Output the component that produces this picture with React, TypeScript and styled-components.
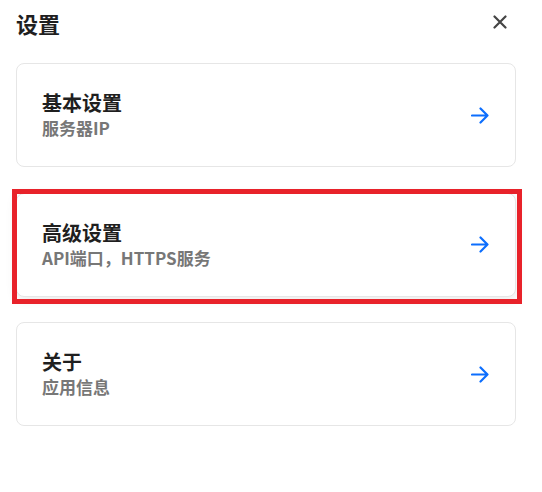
import React from "react";
import styled, { createGlobalStyle } from "styled-components";

const GlobalStyle = createGlobalStyle`
  html, body {
    margin: 0;
    padding: 0;
    background: #ffffff;
  }
  body {
    font-family: "Noto Sans CJK SC", "Noto Sans", sans-serif;
    -webkit-font-smoothing: antialiased;
  }
`;

const Panel = styled.div`
  width: 500px;
  margin-left: 16px;
  display: flex;
  flex-direction: column;
`;

const Header = styled.header`
  box-sizing: border-box;
  height: 63px;
  display: flex;
  justify-content: space-between;
  align-items: flex-start;
`;

const Title = styled.h1`
  margin: 7px 0 0 0;
  font-size: 22px;
  line-height: 32px;
  font-weight: 700;
  color: #1f1f1f;
`;

const CloseButton = styled.button`
  width: 28px;
  height: 28px;
  margin-top: 8px;
  margin-right: 2px;
  padding: 0;
  border: none;
  background: transparent;
  display: flex;
  align-items: center;
  justify-content: center;
  color: #454545;
  cursor: pointer;
`;

const List = styled.div`
  display: flex;
  flex-direction: column;
  gap: 25.5px;
`;

const Card = styled.div<{ $highlighted?: boolean }>`
  position: relative;
  box-sizing: border-box;
  height: 104px;
  padding: 0 26px 0 25px;
  border: 1px solid #e6e6e6;
  border-radius: 8px;
  background: #ffffff;
  display: flex;
  align-items: center;
  justify-content: space-between;
  cursor: pointer;
  box-shadow: ${(p) => (p.$highlighted ? "0 3px 12px rgba(0, 0, 0, 0.09)" : "none")};

  &::after {
    content: "";
    display: ${(p) => (p.$highlighted ? "block" : "none")};
    position: absolute;
    left: -5px;
    top: -5px;
    right: -7px;
    bottom: -8px;
    border: 5px solid #e8222a;
    pointer-events: none;
  }
`;

const TextBlock = styled.div`
  display: flex;
  flex-direction: column;
`;

const CardTitle = styled.div`
  font-size: 20px;
  line-height: 26px;
  font-weight: 700;
  color: #1f1f1f;
`;

const CardSubtitle = styled.div`
  font-size: 17px;
  line-height: 24px;
  font-weight: 600;
  color: #777777;
`;

const ArrowIcon = styled.svg`
  flex: none;
  color: #0d6efd;
`;

const CloseIcon = () => (
  <svg width="14" height="14" viewBox="0 0 14 14" fill="none">
    <path d="M1.5 1.5 L12.5 12.5 M12.5 1.5 L1.5 12.5" stroke="currentColor" strokeWidth="2.2" strokeLinecap="round" />
  </svg>
);

const Arrow = () => (
  <ArrowIcon width="18" height="17" viewBox="0 0 18 17" fill="none">
    <path d="M1 8.5 H16.5 M9.5 1.5 L16.5 8.5 L9.5 15.5" stroke="currentColor" strokeWidth="2.2" strokeLinecap="round" strokeLinejoin="round" />
  </ArrowIcon>
);

const items = [
  { title: "基本设置", subtitle: "服务器IP" },
  { title: "高级设置", subtitle: "API端口，HTTPS服务", highlighted: true },
  { title: "关于", subtitle: "应用信息" },
];

export default function App() {
  return (
    <>
      <GlobalStyle />
      <Panel>
        <Header>
          <Title>设置</Title>
          <CloseButton aria-label="关闭">
            <CloseIcon />
          </CloseButton>
        </Header>
        <List>
          {items.map((it) => (
            <Card key={it.title} $highlighted={it.highlighted}>
              <TextBlock>
                <CardTitle>{it.title}</CardTitle>
                <CardSubtitle>{it.subtitle}</CardSubtitle>
              </TextBlock>
              <Arrow />
            </Card>
          ))}
        </List>
      </Panel>
    </>
  );
}
